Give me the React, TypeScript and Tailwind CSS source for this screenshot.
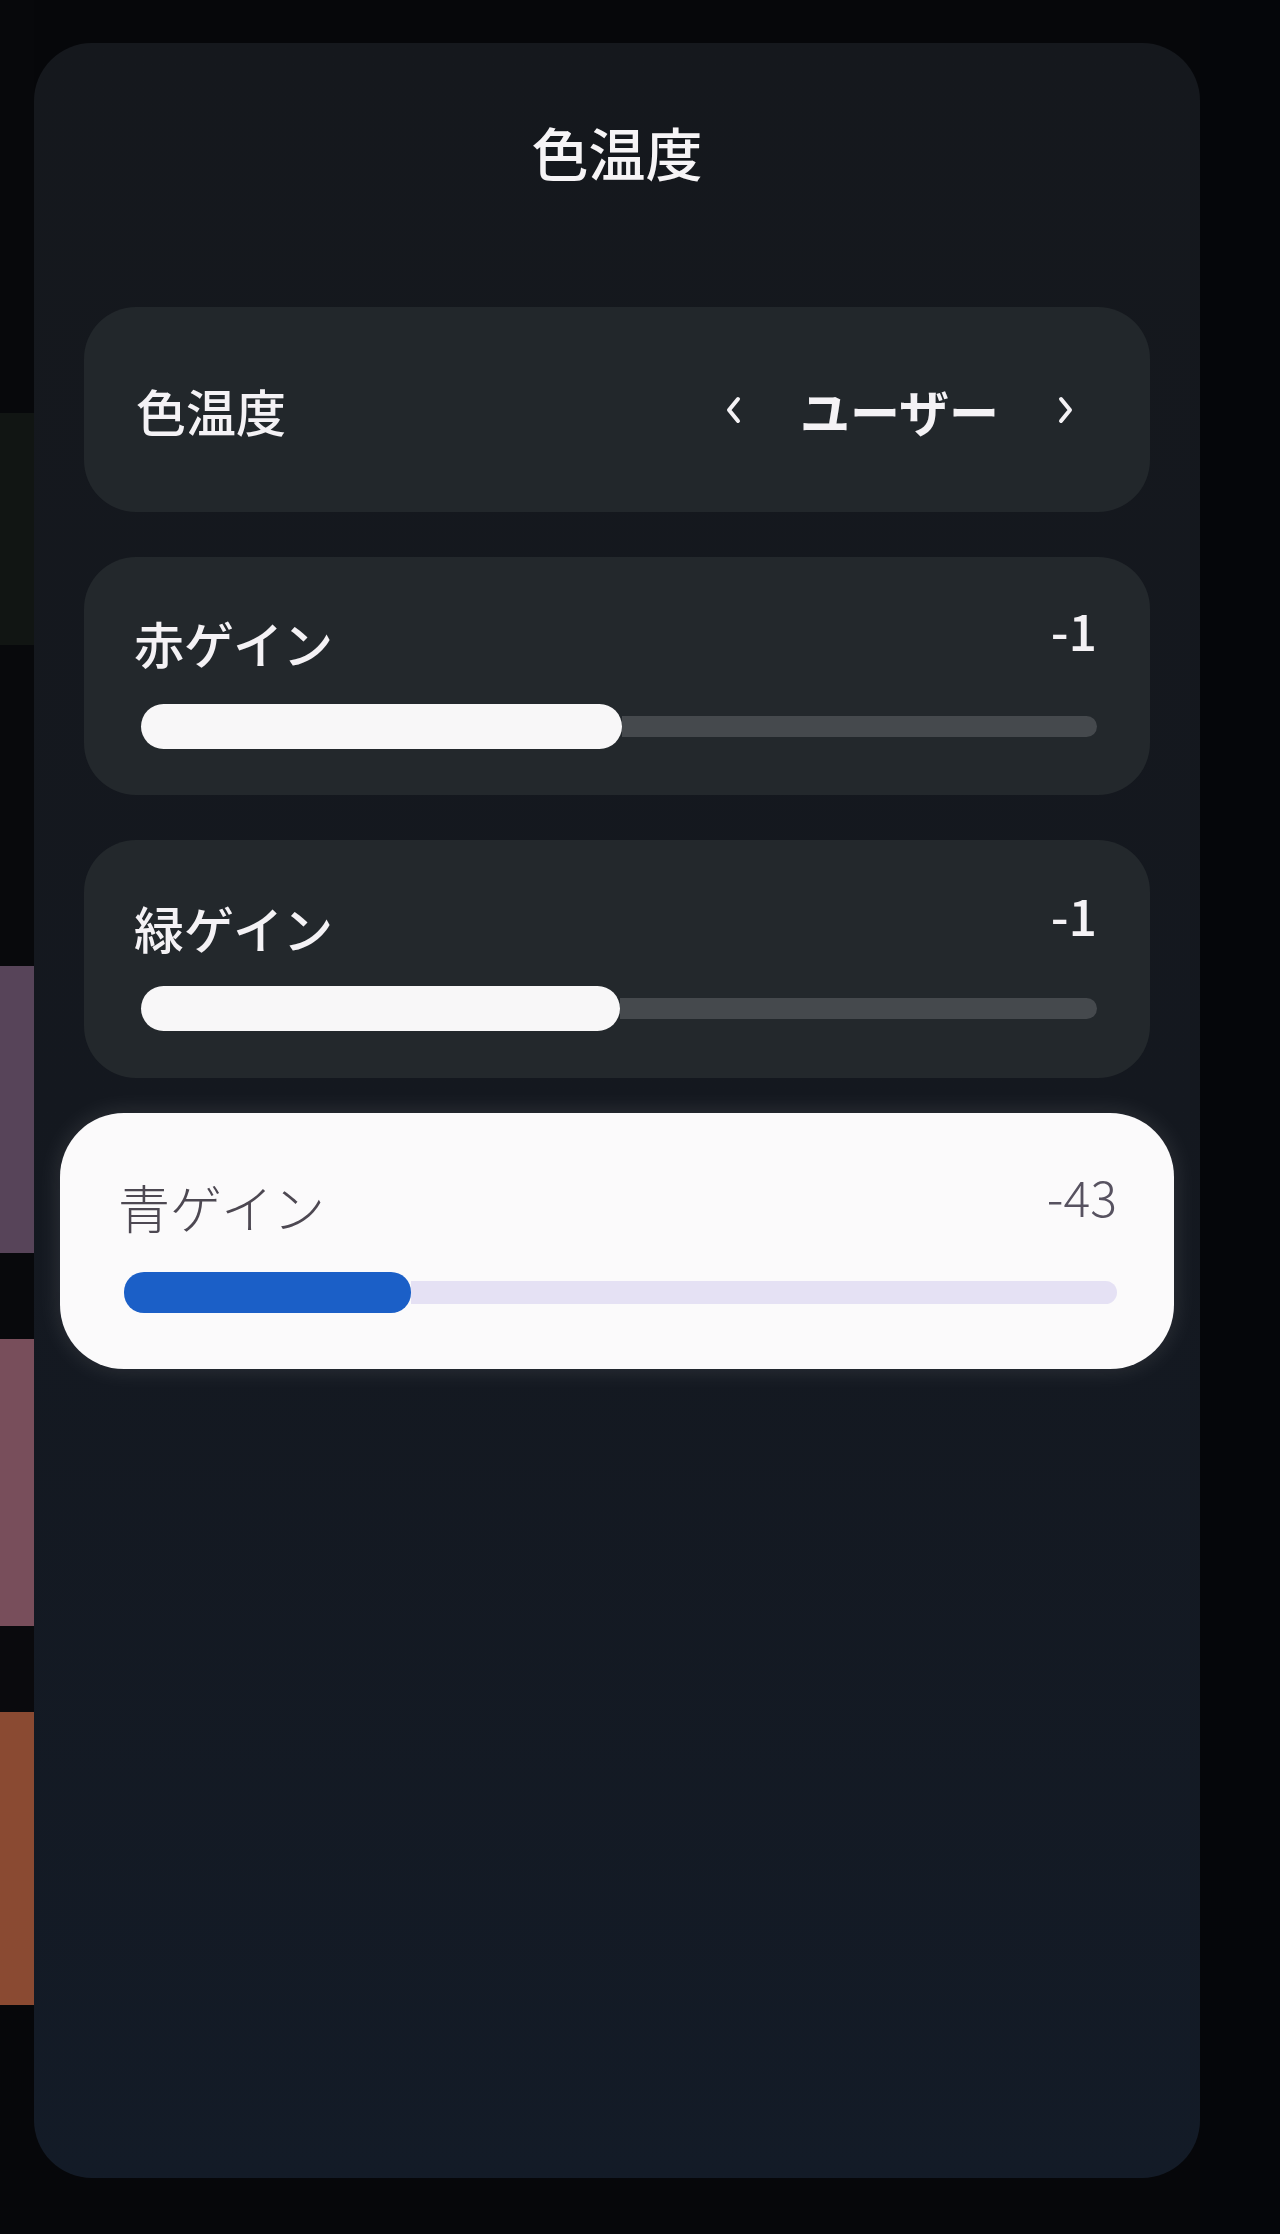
import React from "react";

function ChevronLeft() {
  return (
    <svg width="18" height="30" viewBox="0 0 18 30" fill="none">
      <path d="M14 4 L5 15 L14 26" stroke="#f4f2f5" strokeWidth="4" strokeLinecap="round" strokeLinejoin="round" />
    </svg>
  );
}

function ChevronRight() {
  return (
    <svg width="18" height="30" viewBox="0 0 18 30" fill="none">
      <path d="M4 4 L13 15 L4 26" stroke="#f4f2f5" strokeWidth="4" strokeLinecap="round" strokeLinejoin="round" />
    </svg>
  );
}

function DarkSliderCard({
  label,
  value,
  pct,
  labelTop,
  sliderTop,
}: {
  label: string;
  value: string;
  pct: number;
  labelTop: string;
  sliderTop: string;
}) {
  return (
    <div className={`mx-[50px] h-[238px] rounded-[52px] bg-[#23282c] ${labelTop}`}>
      <div className="flex items-center justify-between pl-[50px] pr-[53px]">
        <span className="text-[50px] leading-none font-medium text-[#f4f2f5]">{label}</span>
        <span className="mb-[26px] text-[50px] leading-none font-medium text-[#f4f2f5]">{value}</span>
      </div>
      <div className={`${sliderTop} ml-[57px] mr-[53px] flex h-[45px] items-center`}>
        <div className="h-[45px] shrink-0 rounded-full bg-[#f8f7f8]" style={{ width: `${pct}%` }} />
        <div className="h-[21px] flex-1 rounded-r-full bg-[#45494d]" />
      </div>
    </div>
  );
}

export default function App() {
  return (
    <div className="flex h-[2234px] w-[1280px] overflow-hidden bg-[#06070a] font-['Noto_Sans_CJK_JP','Noto_Sans',sans-serif]">
      {/* background strips visible on left edge */}
      <div className="flex w-[34px] shrink-0 flex-col">
        <div className="h-[413px] bg-[#07080b]" />
        <div className="h-[232px] bg-[#111513]" />
        <div className="h-[321px] bg-[#08090c]" />
        <div className="h-[287px] bg-[#574459]" />
        <div className="h-[86px] bg-[#08090c]" />
        <div className="h-[287px] bg-[#784e5b]" />
        <div className="h-[86px] bg-[#0a0a0d]" />
        <div className="h-[293px] bg-[#8a4a32]" />
        <div className="flex-1 bg-[#06070a]" />
      </div>

      {/* main panel */}
      <div className="mt-[43px] flex h-[2135px] w-[1166px] shrink-0 flex-col rounded-[58px] bg-gradient-to-b from-[#15181d] via-[#14181f] to-[#131b27] pt-[80px]">
        <h1 className="text-center text-[57px] leading-none font-medium text-[#f6f4f6]">色温度</h1>

        {/* color temperature selector */}
        <div className="mx-[50px] mt-[127px] flex h-[205px] items-center justify-between rounded-[52px] bg-[#22272b] pl-[52px] pr-[75px]">
          <span className="text-[50px] leading-none font-medium text-[#f4f2f5]">色温度</span>
          <div className="flex items-center gap-[58px]">
            <ChevronLeft />
            <span className="text-[50px] leading-none font-bold text-[#f4f2f5]">ユーザー</span>
            <ChevronRight />
          </div>
        </div>

        <div className="mt-[45px]">
          <DarkSliderCard label="赤ゲイン" value="-1" pct={50.3} labelTop="pt-[47px]" sliderTop="mt-[24px]" />
        </div>
        <div className="mt-[45px]">
          <DarkSliderCard label="緑ゲイン" value="-1" pct={50.1} labelTop="pt-[49px]" sliderTop="mt-[21px]" />
        </div>

        {/* focused blue gain */}
        <div className="mx-[26px] mt-[35px] h-[256px] rounded-[64px] bg-[#fbfafb] pt-[57px] shadow-[0_0_24px_rgba(255,255,255,0.12)]">
          <div className="flex items-center justify-between pl-[58px] pr-[57px]">
            <span className="text-[52px] leading-none font-light text-[#4d4852]">青ゲイン</span>
            <span className="mb-[24px] text-[50px] leading-none font-light text-[#575260]">-43</span>
          </div>
          <div className="mt-[28px] ml-[64px] mr-[57px] flex h-[41px] items-center">
            <div className="h-[41px] shrink-0 rounded-[20px] bg-[#1b5fc7]" style={{ width: "28.9%" }} />
            <div className="h-[23px] flex-1 rounded-r-full bg-[#e5e1f4]" />
          </div>
        </div>
      </div>

      <div className="flex-1 bg-[#05060a]" />
    </div>
  );
}
